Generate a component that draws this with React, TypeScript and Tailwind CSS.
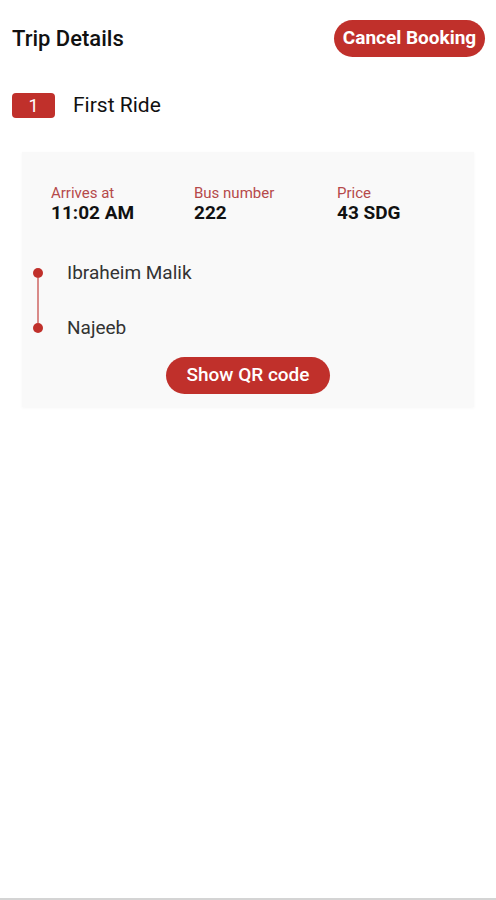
import React from "react";

export default function App() {
  return (
    <div className="w-[496px] h-[900px] bg-white relative flex flex-col" style={{ fontFamily: "Roboto, 'Noto Sans', sans-serif" }}>
      <div className="flex items-center justify-between pl-3 pr-[11px] pt-[20px]">
        <div className="text-[22px] font-medium text-[#111]">Trip Details</div>
        <button className="h-[37px] w-[151px] rounded-full bg-[#c0302b] text-white text-[19px] font-bold">Cancel Booking</button>
      </div>
      <div className="flex items-center pl-3 mt-[33px]">
        <div className="w-[43px] h-[25px] rounded-[4px] bg-[#c0302b] text-white text-[18px] flex items-center justify-center">1</div>
        <div className="ml-[18px] text-[21px] text-[#111]">First Ride</div>
      </div>
      <div className="mx-[22px] mt-[30px] h-[255px] bg-[#f9f9f9] shadow-[0_1px_3px_rgba(0,0,0,0.04)] flex flex-col">
        <div className="grid grid-cols-[143px_143px_143px] pl-[29px] pt-[32px]">
          <div className="flex flex-col">
            <span className="text-[15px] leading-[18px] text-[#b5494a]">Arrives at</span>
            <span className="text-[19px] leading-[22px] font-bold text-[#111]">11:02 AM</span>
          </div>
          <div className="flex flex-col">
            <span className="text-[15px] leading-[18px] text-[#b5494a]">Bus number</span>
            <span className="text-[19px] leading-[22px] font-bold text-[#111]">222</span>
          </div>
          <div className="flex flex-col">
            <span className="text-[15px] leading-[18px] text-[#b5494a]">Price</span>
            <span className="text-[19px] leading-[22px] font-bold text-[#111]">43 SDG</span>
          </div>
        </div>
        <div className="flex mt-[38px] pl-[11px]">
          <div className="flex flex-col items-center w-[10px] pt-[6px]">
            <div className="w-[10px] h-[10px] rounded-full bg-[#c0302b]" />
            <div className="w-[2px] h-[45px] bg-[#d98a88]" />
            <div className="w-[10px] h-[10px] rounded-full bg-[#c0302b]" />
          </div>
          <div className="flex flex-col ml-[24px] text-[19px] text-[#333]">
            <span className="leading-[22px]">Ibraheim Malik</span>
            <span className="leading-[22px] mt-[33px]">Najeeb</span>
          </div>
        </div>
        <div className="flex justify-center mt-[18px]">
          <button className="h-[37px] w-[164px] rounded-full bg-[#c0302b] text-white text-[19px] font-medium">Show QR code</button>
        </div>
      </div>
      <div className="absolute bottom-0 left-0 w-full h-[2px] bg-[#d4d4d4]" />
    </div>
  );
}
